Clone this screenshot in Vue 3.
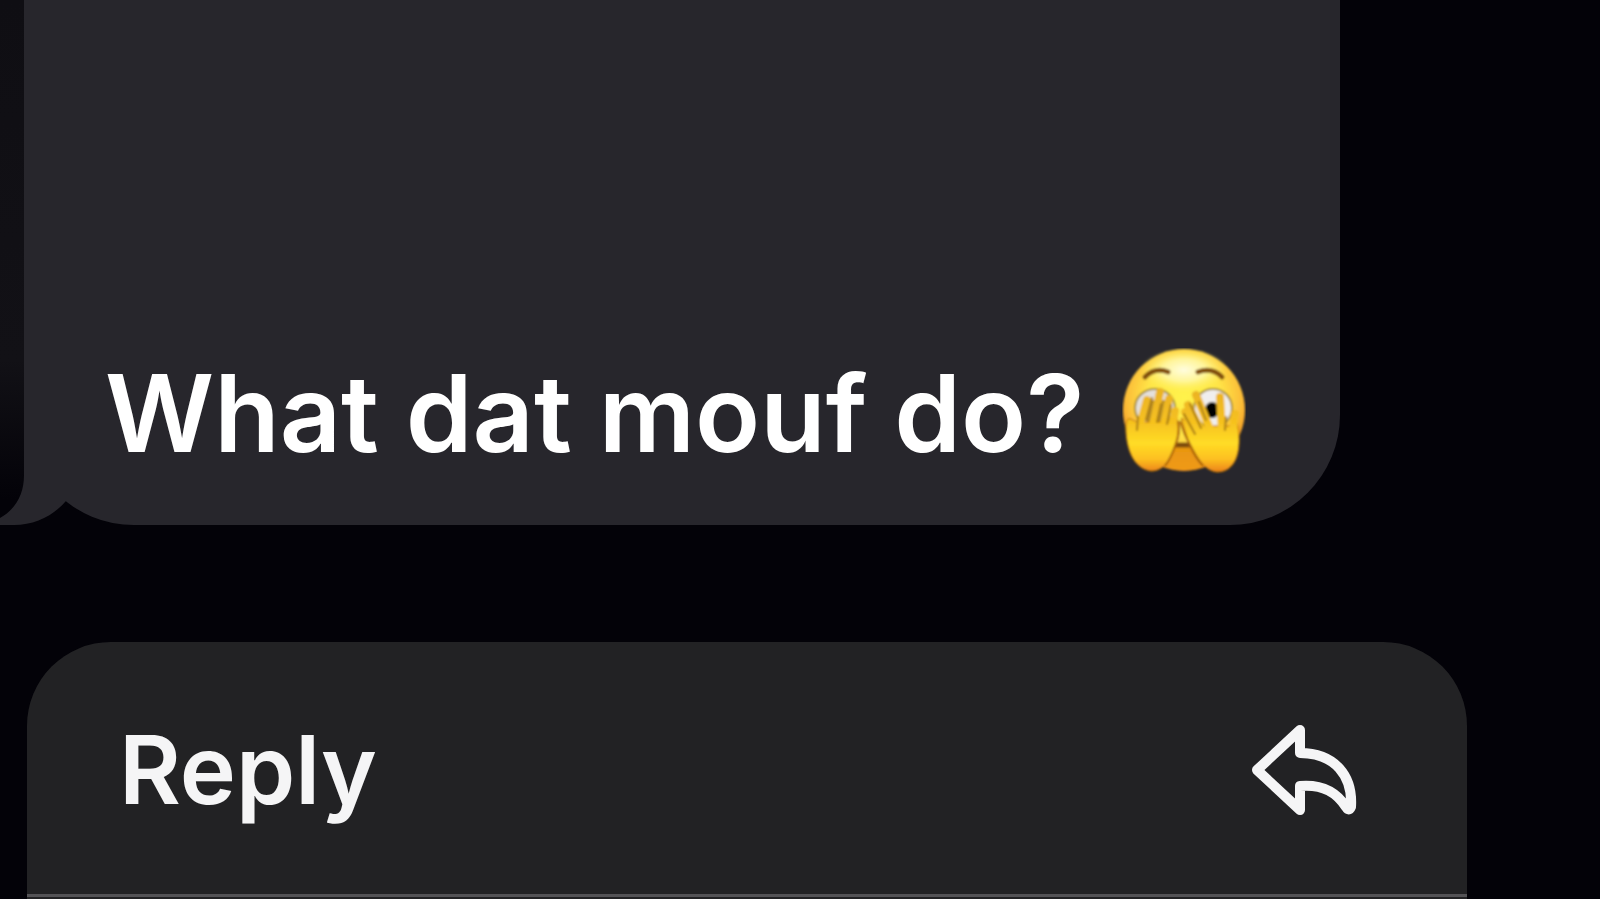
<script setup>
const message = 'What dat mouf do?'
const leftFingers = ['M17 80 L25 52', 'M30 82 L38 44', 'M41 82 L47 51', 'M49 86 L53 63']
const rightFingers = ['M78 92 L63 64', 'M82 88 L66 57', 'M90 86 L74 47', 'M100 84 L98 49', 'M110 88 L113 66']
const leftGaps = ['M24 72 L30 50', 'M35 74 L39 56', 'M45 76 L49 57', 'M15 82 L16 69']
const rightGaps = ['M73 86 L62 66', 'M79 80 L68 56', 'M84 72 L77 54', 'M103 82 L104 69']
</script>

<template>
  <main class="screen">
    <section class="bubble" aria-label="Message">
      <div class="backdrop"></div>
      <p class="message">
        <span>{{ message }}</span>
        <svg class="emoji" viewBox="0 0 124 126" role="img" aria-label="Face with peeking eye">
          <defs>
            <radialGradient id="face" cx="0.5" cy="0.4" r="0.6">
              <stop offset="0" stop-color="#fff34c" />
              <stop offset="0.5" stop-color="#ffe547" />
              <stop offset="0.78" stop-color="#fcbe38" />
              <stop offset="1" stop-color="#ee8a16" />
            </radialGradient>
            <radialGradient id="shine" cx="0.5" cy="0.5" r="0.5">
              <stop offset="0" stop-color="#fffde0" />
              <stop offset="0.5" stop-color="#fff9b0" stop-opacity="0.8" />
              <stop offset="1" stop-color="#fff060" stop-opacity="0" />
            </radialGradient>
            <linearGradient id="palm" gradientUnits="userSpaceOnUse" x1="0" y1="40" x2="0" y2="125">
              <stop offset="0" stop-color="#e9b125" />
              <stop offset="0.4" stop-color="#f6c11f" />
              <stop offset="0.65" stop-color="#ffdc26" />
              <stop offset="0.84" stop-color="#fdbf20" />
              <stop offset="1" stop-color="#ea7c17" />
            </linearGradient>
            <linearGradient id="chin" x1="0" y1="0" x2="0" y2="1">
              <stop offset="0" stop-color="#e8960f" />
              <stop offset="1" stop-color="#f09a1a" />
            </linearGradient>
            <filter id="soft" x="-0.1" y="-0.1" width="1.2" height="1.2">
              <feGaussianBlur stdDeviation="0.8" />
            </filter>
          </defs>
          <g filter="url(#soft)">
            <circle cx="62" cy="62" r="61" fill="url(#face)" />
            <ellipse cx="62" cy="22" rx="44" ry="22" fill="url(#shine)" />
            <path d="M52 98 H73 L82 119 Q62 126 42 119Z" fill="url(#chin)" />
            <path d="M23 29 Q33 19 46 24" fill="none" stroke="#82500b" stroke-width="5" stroke-linecap="round" />
            <path d="M76 24 Q90 19 100 29" fill="none" stroke="#82500b" stroke-width="5" stroke-linecap="round" />
            <ellipse cx="33" cy="60" rx="20" ry="19" fill="#e4e0dc" stroke="#a8903c" stroke-width="2" />
            <ellipse cx="91" cy="60" rx="19" ry="19" fill="#f0eeee" stroke="#a8903c" stroke-width="2" />
            <path d="M28 52 H48 V76 H24Z" fill="#b48a20" />
            <ellipse cx="90" cy="62" rx="7" ry="8" fill="#050302" />
            <path d="M53 97 H72" fill="none" stroke="#7d4c08" stroke-width="5" />
            <path
              d="M4 84 Q3 68 9 71 L15 74 L48 74 L54 66 Q59 80 53 98 C48 110 44 122 30 123 C18 122 6 112 4 84Z"
              fill="url(#palm)"
              stroke="#c0720d"
              stroke-width="1"
            />
            <path
              d="M59 70 L74 78 L108 78 L112 66 Q116 62 115 74 C120 96 117 124 95 124 C80 122 74 106 66 92Z"
              fill="url(#palm)"
              stroke="#c0720d"
              stroke-width="1"
            />
            <path
              v-for="finger in leftFingers"
              :key="finger"
              :d="finger"
              fill="none"
              stroke="url(#palm)"
              stroke-width="8"
              stroke-linecap="round"
            />
            <path
              v-for="finger in rightFingers"
              :key="finger"
              :d="finger"
              fill="none"
              stroke="url(#palm)"
              stroke-width="8"
              stroke-linecap="round"
            />
            <path
              v-for="gap in [...leftGaps, ...rightGaps]"
              :key="gap"
              :d="gap"
              fill="none"
              stroke="#a87c18"
              stroke-width="2"
              stroke-linecap="round"
            />
            <path d="M56 73 Q59 84 53 98 Q49 110 43 118" fill="none" stroke="#a8600c" stroke-width="2" />
            <path d="M58 73 Q62 86 68 97 Q73 109 81 118" fill="none" stroke="#a8600c" stroke-width="2" />
          </g>
        </svg>
      </p>
      <svg class="tail" viewBox="0 0 66 110" aria-hidden="true">
        <path d="M24 0 V60 C24 79 16 94 0 103 V110 H14 C35 110 53 101 66 86 V0Z" fill="#27262c" />
      </svg>
    </section>

    <nav class="menu" aria-label="Message actions">
      <button class="action" type="button">
        <span>Reply</span>
        <svg class="arrow" viewBox="0 0 106 92" aria-hidden="true">
          <path
            d="M48 6 L5 46 L48 86 V62 C72 60 85 69 94 83 Q97 88 99 83 C101 52 83 29 48 29Z"
            fill="none"
            stroke="#f5f5f6"
            stroke-width="10"
            stroke-linejoin="round"
          />
        </svg>
      </button>
    </nav>
  </main>
</template>

<style>
body {
  margin: 0;
  background: #030208;
}
</style>

<style scoped>
.screen {
  display: flex;
  flex-direction: column;
  gap: 117px;
  height: 100vh;
  overflow: hidden;
  background: #030208;
  font-family: Inter, "Liberation Sans", sans-serif;
}

.bubble {
  position: relative;
  flex: none;
  margin: 0 260px 0 24px;
  padding: 343px 94px 42px 81px;
  border-radius: 0 0 110px 110px;
  background: #27262c;
}

.backdrop {
  position: absolute;
  top: 0;
  left: -24px;
  width: 24px;
  height: 500px;
  background: linear-gradient(#0f0e13, #121116 72%, #030208);
}

.tail {
  position: absolute;
  left: -24px;
  bottom: 0;
  width: 66px;
  height: 110px;
}

.message {
  display: flex;
  align-items: center;
  justify-content: space-between;
  margin: 0;
  color: #fff;
  font-size: 107px;
  font-weight: 600;
  line-height: 140px;
  white-space: nowrap;
}

.emoji {
  flex: none;
  width: 124px;
  height: 126px;
  margin-bottom: 4px;
}

.menu {
  flex: none;
  margin: 0 133px 0 27px;
  min-height: 300px;
  border-radius: 84px 84px 0 0;
  background: #222224;
  overflow: hidden;
}

.action {
  display: flex;
  align-items: center;
  justify-content: space-between;
  width: 100%;
  padding: 68px 109px 64px 92px;
  border: 0;
  border-bottom: 3px solid #545356;
  background: transparent;
  color: #f5f5f6;
  font-family: inherit;
  font-size: 95px;
  font-weight: 600;
  line-height: 120px;
}

.arrow {
  flex: none;
  width: 106px;
  height: 92px;
}
</style>
